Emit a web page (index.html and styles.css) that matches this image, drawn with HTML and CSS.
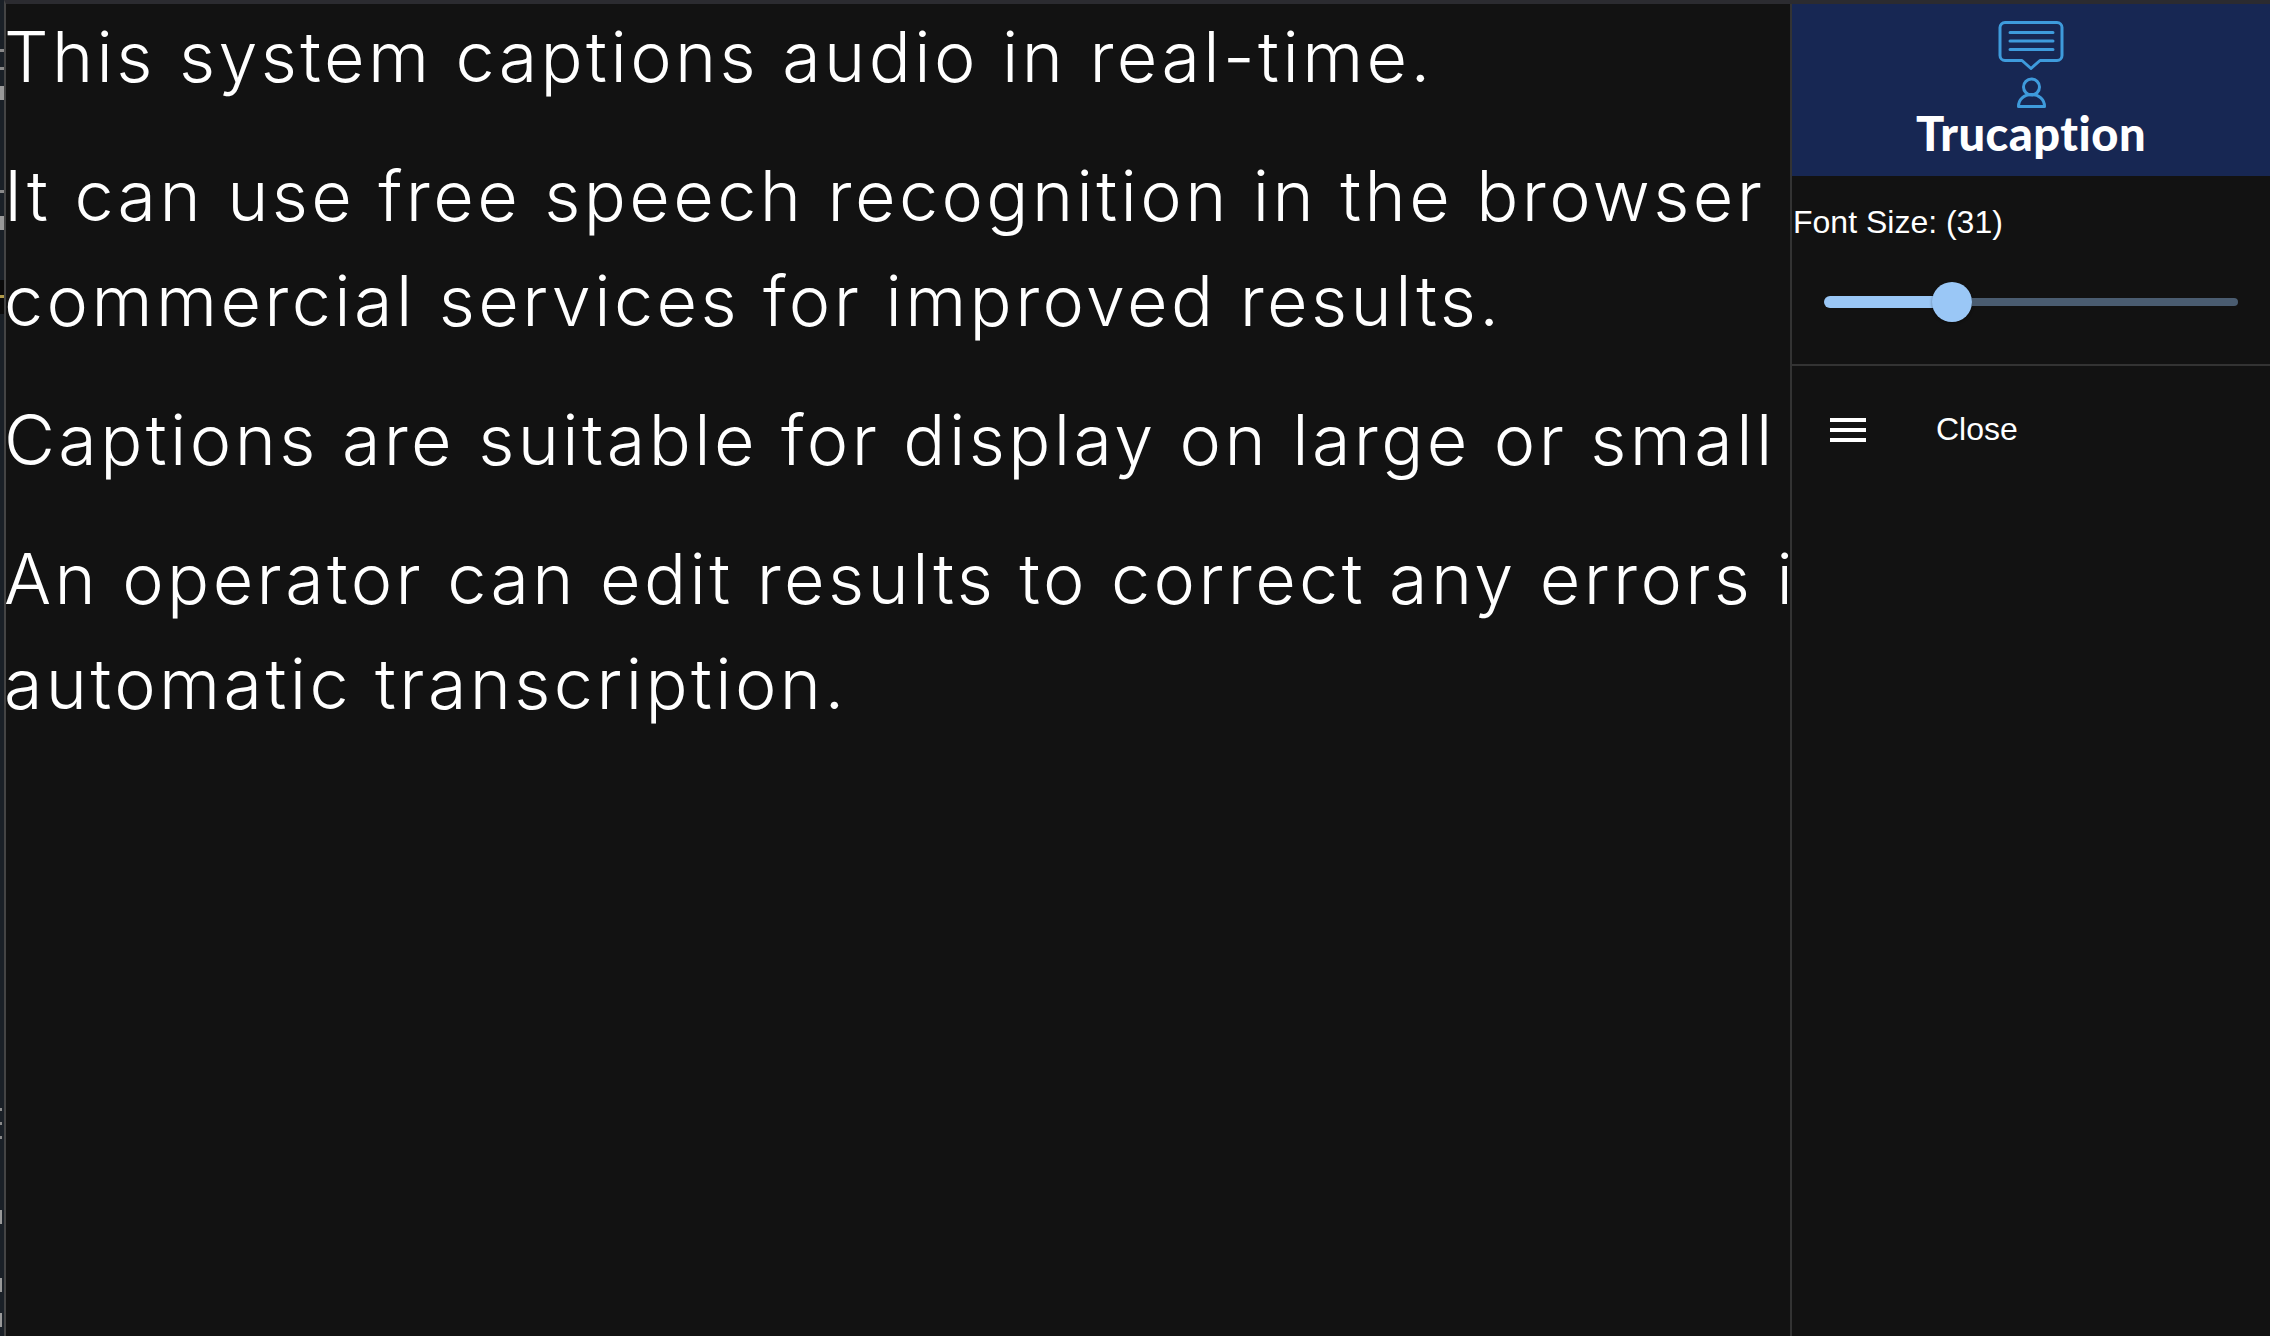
FILE: index.html
```html
<!DOCTYPE html>
<html lang="en">
<head>
  <meta charset="UTF-8">
  <title>Trucaption</title>
  <link rel="stylesheet" href="styles.css">
</head>
<body>
  <!-- Sliver of whatever sits behind the window -->
  <div class="edge"></div>

  <div class="app">
    <!-- Captions, clipped by the side panel -->
    <main class="captions">
      <div class="captions-text">
        <p>This system captions audio in real-time.</p>
        <p>It can use free speech recognition in the browser or<br>commercial services for improved results.</p>
        <p>Captions are suitable for display on large or small screens.</p>
        <p>An operator can edit results to correct any errors in<br>automatic transcription.</p>
      </div>
    </main>

    <!-- Side panel -->
    <aside class="panel">
      <header class="brand">
        <svg class="brand-icon" width="66" height="49" viewBox="0 0 66 49" fill="none" stroke="#3e9bdc" stroke-width="3" stroke-linecap="round" stroke-linejoin="round">
          <path d="M7 1.5h52a5 5 0 0 1 5 5v28a5 5 0 0 1-5 5H42l-9 8-9-8H7a5 5 0 0 1-5-5v-28a5 5 0 0 1 5-5z"/>
          <path d="M12 11.5h43M12 20h43M12 28.500h43"/>
        </svg>
        <svg class="brand-icon person" width="29" height="31" viewBox="0 0 29 31" fill="none" stroke="#3e9bdc" stroke-width="3" stroke-linejoin="round">
          <circle cx="14.500" cy="10" r="8"/>
          <path d="M1.500 29.500c0-7 5.500-12 13-12s13 5 13 12z"/>
        </svg>
        <h1>Trucaption</h1>
      </header>

      <section class="font-size">
        <label>Font Size: (31)</label>
        <div class="slider">
          <div class="slider-fill"></div>
          <div class="slider-thumb"></div>
          <div class="slider-rest"></div>
        </div>
      </section>

      <nav class="menu">
        <div class="menu-item">
          <svg width="36" height="24" viewBox="0 0 36 24" fill="#fff">
            <path d="M0 0h36v4H0zM0 10h36v4H0zM0 20h36v4H0z"/>
          </svg>
          <span class="menu-label">Close</span>
        </div>
      </nav>
    </aside>
  </div>
</body>
</html>
```

FILE: styles.css
```css
html, body {
  height: 100%;
}

body {
  display: flex;
  margin: 0;
  background-color: #1a2027;
  overflow: hidden;
}

/* Left edge marks */
.edge {
  width: 4px;
  flex-shrink: 0;
  background-repeat: no-repeat;
  background-image:
    linear-gradient(#8a8a8a, #8a8a8a),
    linear-gradient(#8a8a8a, #8a8a8a),
    linear-gradient(#9a9a9a, #9a9a9a),
    linear-gradient(#8a8a8a, #8a8a8a),
    linear-gradient(#9a9a9a, #9a9a9a),
    linear-gradient(#b09a4a, #b09a4a),
    linear-gradient(#0a0a0a, #0a0a0a),
    linear-gradient(#8a8a8a, #8a8a8a),
    linear-gradient(#8a8a8a, #8a8a8a),
    linear-gradient(#8a8a8a, #8a8a8a),
    linear-gradient(#9a9a9a, #9a9a9a),
    linear-gradient(#9a9a9a, #9a9a9a),
    linear-gradient(#9a9a9a, #9a9a9a);
  background-size:
    4px 3px, 4px 3px, 4px 14px, 4px 3px, 4px 14px,
    4px 3px, 4px 34px, 2px 3px, 2px 3px, 2px 3px,
    2px 14px, 2px 14px, 2px 14px;
  background-position:
    0 49px, 0 67px, 0 86px, 0 190px, 0 216px,
    0 295px, 0 280px, 0 1108px, 0 1122px, 0 1136px,
    0 1210px, 0 1278px, 0 1313px;
}

.app {
  display: flex;
  flex: 1;
  min-width: 0;
  height: 100%;
  box-sizing: border-box;
  border-top: 4px solid #2b2b30;
  border-left: 2px solid #444;
  background-color: #121212;
}

/* Captions */
.captions {
  flex: 1;
  min-width: 0;
  overflow: hidden;
}

.captions-text {
  margin-left: -2px;
  font-family: "Inter", sans-serif;
  font-weight: 300;
  font-size: 70px;
  letter-spacing: 3.4px;
  line-height: 105px;
  white-space: nowrap;
  color: #fff;
}

.captions-text p {
  margin: 0 0 34px 0;
}

/* Side panel */
.panel {
  width: 478px;
  flex-shrink: 0;
  border-left: 2px solid #333;
  font-family: "Liberation Sans", sans-serif;
  color: #fff;
}

.brand {
  display: flex;
  flex-direction: column;
  align-items: center;
  height: 172px;
  box-sizing: border-box;
  padding-top: 17px;
  background-color: #172753;
}

.brand-icon {
  display: block;
}

.person {
  margin-top: 7px;
}

.brand h1 {
  margin: 0;
  font-family: "Lato", sans-serif;
  font-size: 47px;
  font-weight: 900;
  line-height: 50px;
  letter-spacing: 0.5px;
  font-variant-ligatures: none;
}

.font-size {
  height: 190px;
  box-sizing: border-box;
  padding-top: 28px;
  border-bottom: 2px solid #333;
}

.font-size label {
  display: block;
  font-size: 32px;
  line-height: 36px;
  margin-left: 1px;
}

.slider {
  display: flex;
  align-items: center;
  margin: 42px 32px 0 32px;
  height: 40px;
}

.slider-fill {
  width: 118px;
  height: 12px;
  border-radius: 6px 0 0 6px;
  background-color: #9ac7f6;
}

.slider-thumb {
  width: 40px;
  height: 40px;
  flex-shrink: 0;
  margin-left: -10px;
  border-radius: 50%;
  background-color: #9ac7f6;
  box-shadow: 0 1px 3px rgba(0,0,0,0.4);
}

.slider-rest {
  flex: 1;
  height: 8px;
  border-radius: 0 4px 4px 0;
  background-color: #4a5c70;
}

.menu-item {
  display: flex;
  align-items: center;
  gap: 70px;
  padding: 46px 0 0 38px;
  font-size: 32px;
  line-height: 36px;
}

.menu-label {
  margin-top: -1px;
}
```
